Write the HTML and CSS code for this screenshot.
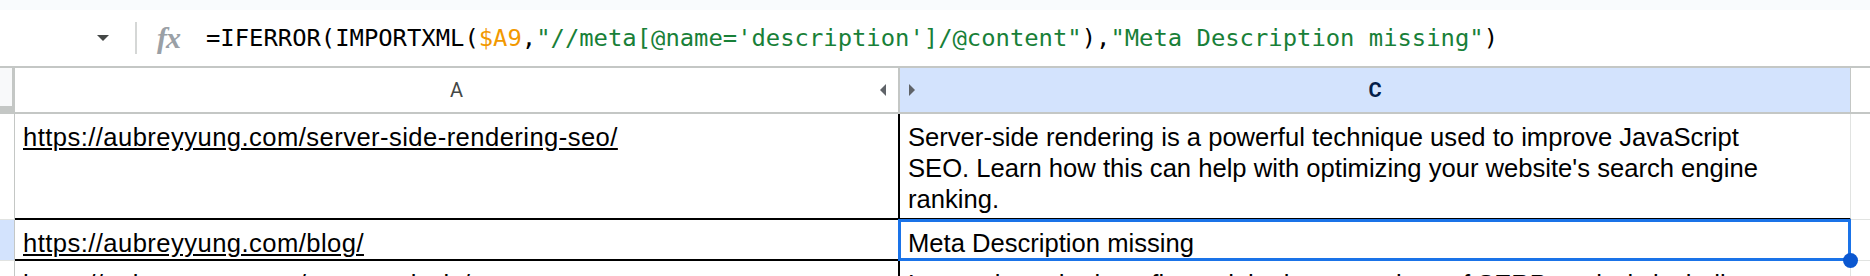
FILE: index.html
```html
<!DOCTYPE html>
<html lang="en">
<head>
  <meta charset="UTF-8">
  <meta name="viewport" content="width=device-width, initial-scale=1.0">
  <title>Sheet</title>
  <link rel="stylesheet" href="styles.css">
</head>
<body>

  <div class="top-strip"></div>

  <div class="formula-bar">
    <div class="name-box"><span class="dropdown"></span></div>
    <div class="divider"></div>
    <div class="fx">fx</div>
    <div class="formula">=IFERROR(IMPORTXML(<span class="ref">$A9</span>,<span class="str">"//meta[@name='description']/@content"</span>),<span class="str">"Meta Description missing"</span>)</div>
  </div>

  <div class="sheet">
    <!-- column headers -->
    <div class="corner"></div>
    <div class="col-head">
      <span></span>
      <span class="letter">A</span>
      <span class="arrow-left"></span>
    </div>
    <div class="col-head selected">
      <span class="arrow-right"></span>
      <span class="letter">C</span>
      <span></span>
    </div>
    <div class="col-head blank"></div>

    <!-- row 1 -->
    <div class="row-head"></div>
    <div class="cell col-a"><a href="#">https://aubreyyung.com/server-side-rendering-seo/</a></div>
    <div class="cell col-c">Server-side rendering is a powerful technique used to improve JavaScript SEO. Learn how this can help with optimizing your website's search engine ranking.</div>
    <div class="cell col-d"></div>

    <!-- row 2 -->
    <div class="row-head selected"></div>
    <div class="cell col-a"><a href="#">https://aubreyyung.com/blog/</a></div>
    <div class="cell col-c active">Meta Description missing<span class="handle"></span></div>
    <div class="cell col-d"></div>

    <!-- row 3 -->
    <div class="row-head"></div>
    <div class="cell col-a"><a href="#">https://aubreyyung.com/serp-analysis/</a></div>
    <div class="cell col-c">Learn about the benefits and the best practices of SERP analysis including</div>
    <div class="cell col-d"></div>
  </div>

</body>
</html>
```

FILE: styles.css
```css
* {
  box-sizing: border-box;
}
body {
  margin: 0;
  width: 1870px;
  height: 276px;
  overflow: hidden;
  background-color: #fff;
  font-family: "Liberation Sans", Arial, sans-serif;
}
.top-strip {
  height: 10px;
  background-color: #f9fbfd;
}

/* formula bar */
.formula-bar {
  display: flex;
  align-items: center;
  height: 58px;
  border-bottom: 2px solid #c4c7c5;
  background-color: #fff;
}
.name-box {
  width: 124px;
  display: flex;
  justify-content: flex-end;
  padding-right: 15px;
}
.dropdown {
  width: 0;
  height: 0;
  border-left: 6px solid transparent;
  border-right: 6px solid transparent;
  border-top: 6px solid #444746;
}
.divider {
  width: 2px;
  height: 32px;
  margin-left: 11px;
  background-color: #d5d7d6;
}
.fx {
  width: 26px;
  margin-left: 20px;
  font-family: "Liberation Serif", serif;
  font-style: italic;
  font-weight: bold;
  font-size: 30px;
  color: #9aa0a6;
  letter-spacing: -1px;
}
.formula {
  margin-left: 23px;
  font-family: "DejaVu Sans Mono", "Liberation Mono", monospace;
  font-size: 23.85px;
  color: #000;
  white-space: nowrap;
}
.formula .ref {
  color: #f29900;
}
.formula .str {
  color: #188038;
}

/* grid */
.sheet {
  display: grid;
  grid-template-columns: 15px 885px 951px 1fr;
  grid-template-rows: 46px 106px 41px 60px;
}
.corner {
  background-color: #f8f9fa;
  border-right: 3px solid #c4c7c5;
  border-bottom: 8px solid #c4c7c5;
}
.col-head {
  display: grid;
  grid-template-columns: 1fr auto 1fr;
  align-items: center;
  background-color: #fff;
  border-right: 2px solid #c4c7c5;
  border-bottom: 2px solid #c4c7c5;
  font-family: Roboto, "Liberation Sans", sans-serif;
  font-size: 20px;
  color: #444746;
}
.col-head.selected {
  background-color: #d3e3fd;
  color: #041e49;
  font-weight: bold;
  border-right-width: 1px;
}
.col-head.blank {
  border-right: none;
}
.arrow-left {
  justify-self: end;
  margin-right: 12px;
  width: 0;
  height: 0;
  border-top: 6px solid transparent;
  border-bottom: 6px solid transparent;
  border-right: 6px solid #5f6368;
}
.arrow-right {
  justify-self: start;
  margin-left: 9px;
  width: 0;
  height: 0;
  border-top: 6px solid transparent;
  border-bottom: 6px solid transparent;
  border-left: 6px solid #5f6368;
}
.row-head {
  background-color: #fff;
  border-right: 1px solid #c4c7c5;
  border-bottom: 1px solid #e1e3e1;
}
.row-head.selected {
  background-color: #d3e3fd;
}

.cell {
  padding: 8px 8px 4px;
  font-size: 25.6px;
  line-height: 31px;
  color: #000;
  border-bottom: 2px solid #000;
}
.cell a {
  color: #000;
  text-decoration: underline;
  letter-spacing: 0.44px;
}
.col-a {
  padding-left: 8px;
  border-right: 2px solid #000;
}
.col-c {
  padding-right: 60px;
  border-right: 1px solid #e1e3e1;
}
.col-d {
  border-bottom: 1px solid #e1e3e1;
}

/* active cell */
.cell.active {
  position: relative;
}
.cell.active::after {
  content: "";
  position: absolute;
  top: -1px;
  left: -2px;
  right: -1px;
  bottom: -2px;
  border: 3px solid #1a73e8;
}
.handle {
  position: absolute;
  right: -8px;
  bottom: -9px;
  width: 15px;
  height: 15px;
  border-radius: 50%;
  background-color: #0b57d0;
  z-index: 1;
}
```
